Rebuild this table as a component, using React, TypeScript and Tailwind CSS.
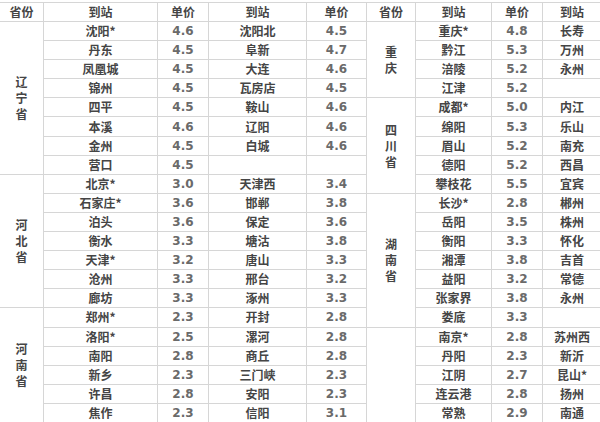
import React from "react";

type Group = { name: string; start: number; span: number };

// 左半边：到站 / 单价 / 到站 / 单价
const left: [string, string, string, string][] = [
  ["沈阳*", "4.6", "沈阳北", "4.5"],
  ["丹东", "4.5", "阜新", "4.7"],
  ["凤凰城", "4.5", "大连", "4.6"],
  ["锦州", "4.5", "瓦房店", "4.5"],
  ["四平", "4.5", "鞍山", "4.6"],
  ["本溪", "4.6", "辽阳", "4.6"],
  ["金州", "4.5", "白城", "4.6"],
  ["营口", "4.5", "", ""],
  ["北京*", "3.0", "天津西", "3.4"],
  ["石家庄*", "3.6", "邯郸", "3.8"],
  ["泊头", "3.6", "保定", "3.6"],
  ["衡水", "3.3", "塘沽", "3.8"],
  ["天津*", "3.2", "唐山", "3.3"],
  ["沧州", "3.3", "邢台", "3.2"],
  ["廊坊", "3.3", "涿州", "3.3"],
  ["郑州*", "2.3", "开封", "2.8"],
  ["洛阳*", "2.5", "漯河", "2.8"],
  ["南阳", "2.8", "商丘", "2.8"],
  ["新乡", "2.3", "三门峡", "2.3"],
  ["许昌", "2.8", "安阳", "2.3"],
  ["焦作", "2.3", "信阳", "3.1"],
];

// 右半边：到站 / 单价 / 到站
const right: [string, string, string][] = [
  ["重庆*", "4.8", "长寿"],
  ["黔江", "5.3", "万州"],
  ["涪陵", "5.2", "永州"],
  ["江津", "5.2", ""],
  ["成都*", "5.0", "内江"],
  ["绵阳", "5.3", "乐山"],
  ["眉山", "5.2", "南充"],
  ["德阳", "5.2", "西昌"],
  ["攀枝花", "5.5", "宜宾"],
  ["长沙*", "2.8", "郴州"],
  ["岳阳", "3.5", "株州"],
  ["衡阳", "3.3", "怀化"],
  ["湘潭", "3.8", "吉首"],
  ["益阳", "3.2", "常德"],
  ["张家界", "3.8", "永州"],
  ["娄底", "3.3", ""],
  ["南京*", "2.8", "苏州西"],
  ["丹阳", "2.3", "新沂"],
  ["江阴", "2.7", "昆山*"],
  ["连云港", "2.8", "扬州"],
  ["常熟", "2.9", "南通"],
];

const leftGroups: Group[] = [
  { name: "辽宁省", start: 0, span: 8 },
  { name: "河北省", start: 8, span: 7 },
  { name: "河南省", start: 15, span: 6 },
];

const rightGroups: Group[] = [
  { name: "重庆", start: 0, span: 4 },
  { name: "四川省", start: 4, span: 5 },
  { name: "湖南省", start: 9, span: 7 },
  { name: "", start: 16, span: 5 },
];

const cjk = "font-['Noto_Sans_CJK_SC',sans-serif] font-bold text-[12px] text-[#454545]";
const num = "font-['DejaVu_Sans',sans-serif] font-bold text-[12px] text-[#6a6a6a]";
const cell = "border border-[#d6d6d6] text-center align-middle p-0 leading-none";

function Province({ g }: { g: Group }) {
  return (
    <td rowSpan={g.span} className={`${cell} ${cjk}`}>
      <div className="flex flex-col items-center leading-[16px]">
        {g.name.split("").map((c, i) => (
          <span key={i}>{c}</span>
        ))}
      </div>
    </td>
  );
}

export default function App() {
  return (
    <div className="w-[600px] h-[422px] overflow-hidden bg-white pt-[2px]">
      <table className="table-fixed border-collapse w-[602px] -ml-px">
        <colgroup>
          <col className="w-[44px]" />
          <col className="w-[114px]" />
          <col className="w-[51px]" />
          <col className="w-[98px]" />
          <col className="w-[60px]" />
          <col className="w-[49px]" />
          <col className="w-[76px]" />
          <col className="w-[51px]" />
          <col className="w-[59px]" />
        </colgroup>
        <thead>
          <tr className="h-[19px]">
            {["省份", "到站", "单价", "到站", "单价", "省份", "到站", "单价", "到站"].map((h, i) => (
              <th key={i} className={`${cell} ${cjk} text-[#383838]`}>
                {h}
              </th>
            ))}
          </tr>
        </thead>
        <tbody>
          {left.map((row, i) => {
            const lg = leftGroups.find((g) => g.start === i);
            const rg = rightGroups.find((g) => g.start === i);
            const r = right[i];
            return (
              <tr key={i} className="h-[19.1px]">
                {lg && <Province g={lg} />}
                <td className={`${cell} ${cjk}`}>{row[0]}</td>
                <td className={`${cell} ${num}`}>{row[1]}</td>
                <td className={`${cell} ${cjk}`}>{row[2]}</td>
                <td className={`${cell} ${num}`}>{row[3]}</td>
                {rg && <Province g={rg} />}
                <td className={`${cell} ${cjk}`}>{r[0]}</td>
                <td className={`${cell} ${num}`}>{r[1]}</td>
                <td className={`${cell} ${cjk}`}>{r[2]}</td>
              </tr>
            );
          })}
        </tbody>
      </table>
    </div>
  );
}
